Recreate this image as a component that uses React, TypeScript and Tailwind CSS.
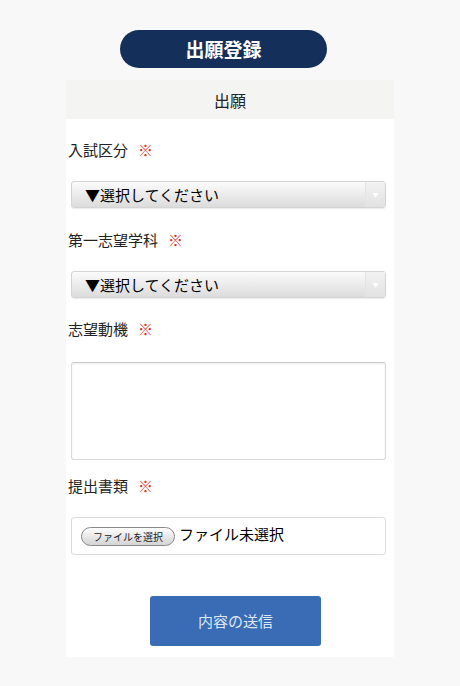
export default function App() {
  const font = { fontFamily: '"Noto Sans CJK JP", "Noto Sans", sans-serif' };

  const Label = ({ text }: { text: string }) => (
    <div className="h-5 pl-[2px] text-[15px] leading-5 text-[#222]">
      {text}
      <span className="ml-[10px] text-[#d9302c]">※</span>
    </div>
  );

  const Select = () => (
    <div className="ml-[5px] mr-[8px] flex h-[27px] rounded-[3px] border border-[#d4d4d4] bg-gradient-to-b from-[#fbfbfb] to-[#dcdcdc] shadow-[0_1px_1px_rgba(0,0,0,0.08)]">
      <div className="flex-1 pl-[13px] text-[15px] leading-[25px] text-black">▼選択してください</div>
      <div className="flex w-[20px] items-center justify-center border-l border-[#e4e4e4] bg-gradient-to-b from-[#f2f2f2] to-[#e2e2e2]">
        <span className="text-[6px] text-white">▼</span>
      </div>
    </div>
  );

  return (
    <div className="min-h-[686px] w-[460px] bg-[#f8f8f8] pt-[30px]" style={font}>
      <div className="ml-[120px] flex h-[38px] w-[207px] items-center justify-center rounded-full bg-[#14305a] text-[19px] font-bold text-white">
        出願登録
      </div>

      <div className="ml-[66px] mt-[12px] w-[328px] bg-white pb-[11px]">
        <div className="flex h-[39px] items-center justify-center bg-[#f4f4f2] text-[16px] text-[#222]">
          出願
        </div>

        <div className="mt-[21px]">
          <Label text="入試区分" />
        </div>
        <div className="mt-[21px]">
          <Select />
        </div>

        <div className="mt-[22px]">
          <Label text="第一志望学科" />
        </div>
        <div className="mt-[21px]">
          <Select />
        </div>

        <div className="mt-[21px]">
          <Label text="志望動機" />
        </div>
        <div className="ml-[5px] mr-[8px] mt-[23px] h-[98px] rounded-[3px] border border-[#d8d8d8] border-t-[#c8c8c8] bg-white shadow-[inset_0_1px_2px_rgba(0,0,0,0.08)]" />

        <div className="mt-[16px]">
          <Label text="提出書類" />
        </div>
        <div className="ml-[5px] mr-[8px] mt-[21px] flex h-[38px] items-center rounded-[3px] border border-[#dcdcdc] bg-white pl-[9px]">
          <span className="flex h-[19px] items-center rounded-full border border-[#8a8a8a] bg-gradient-to-b from-[#fdfdfd] to-[#d4d4d4] px-[11px] text-[10px] text-[#222]">
            ファイルを選択
          </span>
          <span className="ml-[4px] -mt-[3px] text-[15px] text-black">ファイル未選択</span>
        </div>

        <div className="mt-[41px] flex pl-[84px]">
          <div className="flex h-[50px] w-[171px] items-center justify-center rounded-[3px] bg-[#396cb4] text-[15px] text-[#dde6f3]">
            内容の送信
          </div>
        </div>
      </div>
    </div>
  );
}
